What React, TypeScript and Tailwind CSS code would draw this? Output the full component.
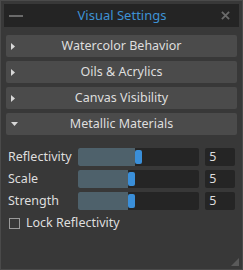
import { useState } from "react";

const sections = ["Watercolor Behavior", "Oils & Acrylics", "Canvas Visibility"];

const sliders = [
  { label: "Reflectivity", value: 5, pos: 57 },
  { label: "Scale", value: 5, pos: 50 },
  { label: "Strength", value: 5, pos: 50 },
];

const Header = ({ title, open }: { title: string; open?: boolean }) => (
  <div className="relative h-[22px] rounded-[2px] bg-[#4b4b4b] flex items-center justify-center text-[12.5px] text-[#dedede]">
    <span className="absolute left-[5px] top-0 h-full flex items-center">
      {open ? (
        <svg width="7" height="4" viewBox="0 0 7 4">
          <path d="M0 0 L7 0 L3.5 4 Z" fill="#d8d8d8" />
        </svg>
      ) : (
        <svg width="4" height="7" viewBox="0 0 4 7">
          <path d="M0 0 L4 3.5 L0 7 Z" fill="#d8d8d8" />
        </svg>
      )}
    </span>
    {title}
  </div>
);

const App = () => {
  const [lock, setLock] = useState(false);
  return (
    <div
      className="w-[243px] h-[270px] bg-[#383838] border border-[#4a4a4a] p-[3px] flex flex-col relative"
      style={{ fontFamily: "'Noto Sans', sans-serif" }}
    >
      <div className="h-[23px] bg-[#242424] flex items-center px-[5px] relative">
        <div className="w-[14px] h-[2px] bg-[#6a6a6a]" />
        <div className="flex-1 text-center text-[13px] text-[#3e92d4]">Visual Settings</div>
        <svg width="9" height="9" viewBox="0 0 10 10" className="mr-[4px]">
          <path d="M1 1 L9 9 M9 1 L1 9" stroke="#6a6a6a" strokeWidth="2" />
        </svg>
      </div>

      <div className="px-[2px] pt-[8px] flex flex-col gap-[4px]">
        {sections.map((s) => (
          <Header key={s} title={s} />
        ))}
        <Header title="Metallic Materials" open />
      </div>

      <div className="px-[4px] pt-[13px] flex flex-col gap-[4px]">
        {sliders.map((s) => (
          <div key={s.label} className="flex items-center h-[18px] text-[12.5px] text-[#dedede]">
            <div className="w-[71px]">{s.label}</div>
            <div className="w-[122px] h-[18px] rounded-[2px] bg-[#252525] relative">
              <div className="h-full rounded-l-[2px] bg-[#4e616b]" style={{ width: `${s.pos}px` }} />
              <div className="absolute top-[2px] h-[14px] w-[7px] rounded-[2px] bg-[#3a8fd9]" style={{ left: `${s.pos}px` }} />
            </div>
            <div className="ml-[6px] w-[30px] h-[18px] rounded-[2px] bg-[#252525] pl-[4px] leading-[18px]">{s.value}</div>
          </div>
        ))}
        <label className="flex items-center h-[16px] gap-[6px] text-[12.5px] text-[#dedede] mt-[1px]">
          <span
            onClick={() => setLock(!lock)}
            className="w-[11px] h-[11px] border border-[#9a9a9a] ml-[1px]"
          />
          Lock Reflectivity
        </label>
      </div>

      <svg width="8" height="8" viewBox="0 0 8 8" className="absolute right-[3px] bottom-[3px]">
        <path d="M8 0 L8 8 L0 8 Z" fill="#5a5a5a" />
      </svg>
    </div>
  );
};

export default App;
